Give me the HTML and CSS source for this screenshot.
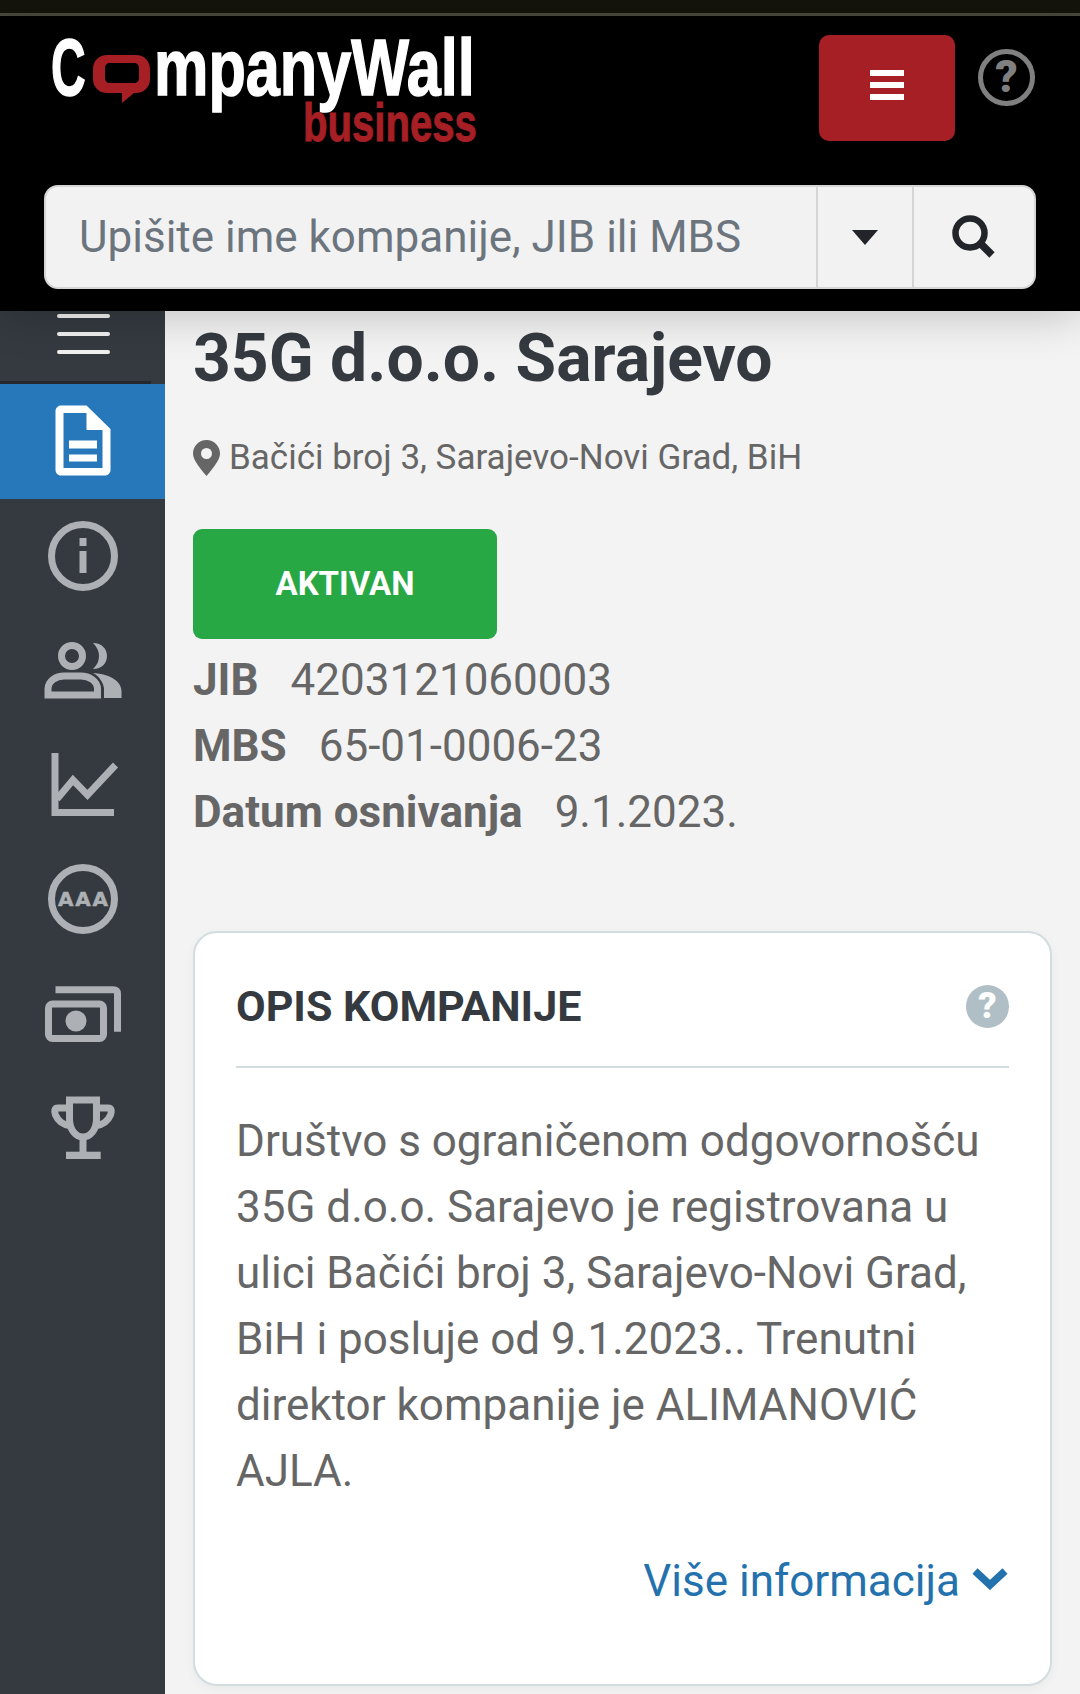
FILE: index.html
```html
<!DOCTYPE html>
<html lang="en">

<head>
    <meta charset="UTF-8">
    <title>35G d.o.o. Sarajevo - CompanyWall</title>
    <link rel="stylesheet" href="styles.css">
</head>

<body>
    <!-- Status strip -->
    <div class="top-strip"></div>

    <!-- Header with logo and search -->
    <header class="site-header">
        <div class="header-row">
            <a class="logo">
                <span class="logo-main">
                    <span class="logo-c">C</span>
                    <svg class="logo-bubble" viewBox="0 0 57 50">
                        <path fill-rule="evenodd" fill="#a51f24" d="M14 2H43C51 2 57 8 57 16V26C57 34 51 40 43 40H41L29 50V40H14C6 40 0 34 0 26V16C0 8 6 2 14 2ZM17 10C14 10 12 12 12 15V25C12 28 14 30 17 30H41C44 30 46 28 46 25V15C46 12 44 10 41 10Z"/>
                    </svg>
                    <span class="logo-text">mpanyWall</span>
                </span>
                <span class="logo-sub">business</span>
            </a>
            <div class="header-actions">
                <button class="menu-btn">
                    <span></span><span></span><span></span>
                </button>
                <span class="help-ring">?</span>
            </div>
        </div>
        <div class="search-box">
            <div class="search-input">Upišite ime kompanije, JIB ili MBS</div>
            <div class="search-drop"><span class="caret"></span></div>
            <div class="search-go">
                <svg width="46" height="46" viewBox="0 0 46 46">
                    <circle cx="19" cy="19" r="14.5" fill="none" stroke="#212529" stroke-width="6.5"/>
                    <path d="M30 30L41 41" stroke="#212529" stroke-width="7.5"/>
                </svg>
            </div>
        </div>
    </header>

    <div class="page">
        <!-- Left icon menu -->
        <nav class="sidebar">
            <div class="side-toggle">
                <span></span><span></span><span></span>
            </div>
            <a class="side-item active">
                <svg viewBox="0 0 80 80">
                    <path fill="#fff" fill-rule="evenodd" d="M18 4.5H43.5L67.5 28V69C67.5 72 65 74.5 62 74.5H18C15 74.5 12.5 72 12.5 69V10C12.5 7 15 4.5 18 4.5ZM20.5 12V67H59.5V29H43.5V12ZM26 39.5H54V47.5H26ZM26 53.5H54V60.5H26Z"/>
                </svg>
            </a>
            <a class="side-item">
                <svg viewBox="0 0 80 80">
                    <circle class="line" cx="40" cy="40" r="31.5"/>
                    <rect class="solid" x="36.5" y="22" width="7" height="8"/>
                    <rect class="solid" x="36.5" y="35" width="7" height="22"/>
                </svg>
            </a>
            <a class="side-item">
                <svg viewBox="0 0 80 80">
                    <circle class="line" cx="29" cy="26" r="10.5"/>
                    <path class="solid" d="M50 13C59 13 64 19 64 26C64 33 59 39 50 39C54 35 56 31 56 26C56 21 54 17 50 13Z"/>
                    <path class="line" d="M5 65V59C5 51 13 46 21 46H38C46 46 54.500 51 54.500 59V65Z"/>
                    <path class="solid" d="M50 43C68 44 78.500 52 78.500 61V68H61V58C60 52 56 46 50 43Z"/>
                </svg>
            </a>
            <a class="side-item">
                <svg viewBox="0 0 80 80">
                    <path class="line" d="M12 8V67.500H71"/>
                    <path class="line" d="M14 54L30 35L44.500 50L72.500 20"/>
                </svg>
            </a>
            <a class="side-item">
                <svg viewBox="0 0 80 80">
                    <circle class="line" cx="40" cy="40" r="31.5"/>
                    <text class="aaa" x="40" y="47" text-anchor="middle" textLength="50">AAA</text>
                </svg>
            </a>
            <a class="side-item">
                <svg viewBox="0 0 80 80">
                    <rect class="line" x="5.500" y="30" width="55" height="34.500" rx="4"/>
                    <circle class="solid" cx="33" cy="47" r="10.500"/>
                    <path class="line" d="M12.500 15.700H70C73 15.700 74.500 17 74.500 20V57.700"/>
                </svg>
            </a>
            <a class="side-item">
                <svg viewBox="0 0 80 80">
                    <path class="line" d="M26.500 12V31C26.500 42 33 49 40 49C47 49 53.500 42 53.500 31V12Z"/>
                    <path class="line" d="M26 20H15C11.500 20 11 23 12.500 27C15 33 20 37 28 38"/>
                    <path class="line" d="M54 20H65C68.500 20 69 23 67.500 27C65 33 60 37 52 38"/>
                    <rect class="solid" x="36.500" y="49" width="7" height="16"/>
                    <rect class="solid" x="23" y="63.700" width="34.700" height="7.300"/>
                </svg>
            </a>
        </nav>

        <!-- Company details -->
        <main class="content">
            <h1 class="company-name">35G d.o.o. Sarajevo</h1>
            <p class="address">
                <svg class="pin" viewBox="0 0 27 36">
                    <path fill-rule="evenodd" fill="#666" d="M13.500 0C21 0 27 6 27 13.500C27 19 22 26 13.500 36C5 26 0 19 0 13.500C0 6 6 0 13.500 0ZM13.500 8A5.500 5.500 0 1 0 13.500 19A5.500 5.500 0 1 0 13.500 8Z"/>
                </svg>
                Bačići broj 3, Sarajevo-Novi Grad, BiH
            </p>
            <div class="status">AKTIVAN</div>
            <dl class="facts">
                <div><dt>JIB</dt><dd>4203121060003</dd></div>
                <div><dt>MBS</dt><dd>65-01-0006-23</dd></div>
                <div><dt>Datum osnivanja</dt><dd>9.1.2023.</dd></div>
            </dl>

            <section class="card">
                <div class="card-head">
                    <h2>OPIS KOMPANIJE</h2>
                    <span class="help-dot">?</span>
                </div>
                <p class="card-text">Društvo s ograničenom odgovornošću 35G d.o.o. Sarajevo je registrovana u ulici Bačići broj 3, Sarajevo-Novi Grad, BiH i posluje od 9.1.2023.. Trenutni direktor kompanije je ALIMANOVIĆ AJLA.</p>
                <a class="more-link">Više informacija
                    <svg class="chevron" width="38" height="24" viewBox="0 0 38 24">
                        <path d="M4 5L19 19L34 5" fill="none" stroke="#2372ae" stroke-width="7.500"/>
                    </svg>
                </a>
            </section>
        </main>
    </div>
</body>

</html>
```

FILE: styles.css
```css
/* Basic styling */
html,
body {
    margin: 0;
    padding: 0;
    height: 1694px;
    overflow: hidden;
}

body {
    font-family: Roboto, "Liberation Sans", sans-serif;
    background-color: #f3f3f3;
    color: #666;
    display: flex;
    flex-direction: column;
}

.top-strip {
    height: 13px;
    background: #14140c;
    border-bottom: 3px solid #4a4a3e;
}

/* Header */
.site-header {
    position: relative;
    z-index: 2;
    height: 295px;
    box-sizing: border-box;
    background: #000;
    padding: 19px 44px 0;
    box-shadow: 0 6px 40px rgba(0, 0, 0, 0.2);
}

.header-row {
    display: flex;
    justify-content: space-between;
    height: 106px;
    margin-bottom: 44px;
}

/* Logo: no condensed face is available, so the bold face is squeezed */
.logo {
    display: flex;
    flex-direction: column;
    align-items: flex-end;
    margin-left: 7px;
    width: 426px;
    font-family: "Liberation Sans", sans-serif;
    font-weight: 700;
}

.logo-main {
    display: flex;
    align-items: flex-start;
    height: 67px;
    color: #fff;
}

.logo-c,
.logo-text {
    display: block;
    font-size: 80px;
    line-height: 80px;
    margin-top: -7px;
    white-space: nowrap;
    transform-origin: left top;
    -webkit-text-stroke: 1.5px #fff;
}

.logo-c {
    width: 35px;
    transform: scaleX(0.6);
}

.logo-text {
    width: 323px;
    transform: scaleX(0.765);
}

.logo-bubble {
    flex: none;
    width: 57px;
    height: 50px;
    margin: 18px 4px 0 7px;
}

.logo-sub {
    display: block;
    width: 174px;
    font-size: 54px;
    line-height: 54px;
    margin-top: -7px;
    color: #a51f24;
    white-space: nowrap;
    transform: scaleX(0.743);
    transform-origin: left top;
    -webkit-text-stroke: 1px #a51f24;
}

.header-actions {
    display: flex;
    align-items: flex-start;
    gap: 23px;
    margin-right: 1px;
}

.menu-btn {
    width: 136px;
    height: 106px;
    border: none;
    border-radius: 10px;
    background: #a51f24;
    display: flex;
    flex-direction: column;
    align-items: center;
    justify-content: flex-start;
    gap: 6px;
    padding: 35px 0 0;
}

.menu-btn span {
    display: block;
    width: 34px;
    height: 6px;
    background: #fff;
}

.help-ring {
    width: 57px;
    height: 57px;
    box-sizing: border-box;
    margin-top: 14px;
    border: 5px solid #808080;
    border-radius: 50%;
    color: #808080;
    font-size: 44px;
    font-weight: 900;
    line-height: 47px;
    text-align: center;
}

/* Search */
.search-box {
    display: flex;
    height: 104px;
    box-sizing: border-box;
    background: #f2f2f2;
    border: 2px solid #d5d5d5;
    border-radius: 14px;
}

.search-input {
    flex: 1;
    padding-left: 33px;
    font-size: 44px;
    line-height: 100px;
    color: #6c757d;
}

.search-drop {
    width: 94px;
    border-left: 2px solid #d5d5d5;
    display: flex;
    align-items: center;
    justify-content: center;
}

.caret {
    width: 0;
    height: 0;
    border-left: 13px solid transparent;
    border-right: 13px solid transparent;
    border-top: 15px solid #212529;
}

.search-go {
    width: 120px;
    border-left: 2px solid #d5d5d5;
    display: flex;
    align-items: center;
    justify-content: center;
}

/* Page columns */
.page {
    flex: 1;
    display: grid;
    grid-template-columns: 165px 1fr;
    min-height: 0;
}

.sidebar {
    background: #343a40;
    overflow: hidden;
}

.side-toggle {
    height: 73px;
    margin-right: 14px;
    box-sizing: border-box;
    padding: 3px 0 0 57px;
    border-bottom: 3px solid #24272c;
    display: flex;
    flex-direction: column;
    gap: 14px;
}

.side-toggle span {
    display: block;
    width: 53px;
    height: 4px;
    border-radius: 2px;
    background: #f0f0f0;
}

.side-item {
    display: flex;
    align-items: center;
    justify-content: center;
    height: 114.500px;
}

.side-item svg {
    width: 80px;
    height: 80px;
}

.side-item.active {
    background: #2778bb;
}

.line {
    fill: none;
    stroke: #adb0b4;
    stroke-width: 7;
}

.solid {
    fill: #adb0b4;
}

.aaa {
    fill: #adb0b4;
    stroke: #adb0b4;
    stroke-width: 0.5;
    font-family: "DejaVu Sans", sans-serif;
    font-weight: 700;
    font-size: 20px;
}

/* Main column */
.content {
    padding: 0 28px;
    min-width: 0;
}

.company-name {
    margin: 13px 0 0;
    font-size: 66px;
    line-height: 70px;
    font-weight: 700;
    color: #343a40;
}

.address {
    margin: 42px 0 0;
    display: flex;
    align-items: center;
    gap: 9px;
    font-size: 35px;
    line-height: 44px;
}

.pin {
    width: 27px;
    height: 36px;
}

.status {
    width: 304px;
    height: 110px;
    margin-top: 49px;
    border-radius: 9px;
    background: #28a745;
    color: #fff;
    font-size: 33px;
    font-weight: 700;
    line-height: 110px;
    text-align: center;
}

.facts {
    margin: 8px 0 0;
    font-size: 44px;
    line-height: 66px;
}

.facts div {
    display: flex;
    gap: 32px;
}

.facts dt {
    font-weight: 700;
}

.facts dd {
    margin: 0;
}

/* Card */
.card {
    margin: 86px 0 0;
    height: 755px;
    box-sizing: border-box;
    padding: 0 41px;
    background: #fff;
    border: 2px solid #d3dcdf;
    border-radius: 24px;
    box-shadow: 0 3px 10px rgba(60, 80, 90, 0.06);
}

.card-head {
    height: 135px;
    box-sizing: border-box;
    padding-top: 13px;
    display: flex;
    align-items: center;
    justify-content: space-between;
    border-bottom: 2px solid #d3dcdf;
}

.card-head h2 {
    margin: 0;
    font-size: 43px;
    font-weight: 700;
    color: #343a40;
}

.help-dot {
    width: 43px;
    height: 43px;
    border-radius: 50%;
    background: #b0bec5;
    color: #fff;
    font-size: 36px;
    font-weight: 900;
    line-height: 43px;
    text-align: center;
}

.card-text {
    margin: 40px 0 0;
    font-size: 44px;
    line-height: 66px;
}

.more-link {
    display: flex;
    align-items: center;
    justify-content: flex-end;
    gap: 11px;
    margin-top: 44px;
    font-size: 44px;
    line-height: 66px;
    color: #2372ae;
}

.chevron {
    margin-top: -6px;
}
```
